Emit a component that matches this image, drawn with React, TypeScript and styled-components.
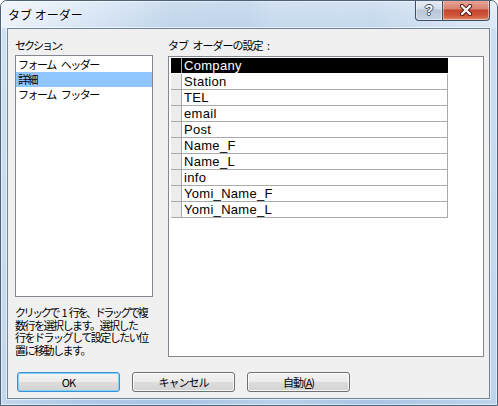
import styled, { createGlobalStyle } from 'styled-components';

const GlobalStyle = createGlobalStyle`
  html, body {
    margin: 0;
    padding: 0;
    background: #ffffff;
  }
  * {
    box-sizing: border-box;
  }
`;

const jpFont = `"Noto Sans CJK JP", "Noto Sans", sans-serif`;
const latinFont = `"Liberation Sans", Arial, "Noto Sans CJK JP", sans-serif`;

const Window = styled.div`
  width: 498px;
  height: 406px;
  display: flex;
  flex-direction: column;
  border: 1px solid #4d6178;
  border-radius: 7px 7px 0 0;
  background:
    linear-gradient(90deg, rgba(255, 255, 255, 0.25) 0%, rgba(255, 255, 255, 0) 15%, rgba(140, 170, 205, 0.18) 35%, rgba(255, 255, 255, 0.12) 55%, rgba(140, 170, 205, 0.15) 75%, rgba(255, 255, 255, 0.2) 100%),
    linear-gradient(180deg, #d6e5f5 0%, #c0d6ee 8%, #b7cfea 60%, #aecae8 100%);
  box-shadow: inset 0 0 0 1px rgba(255, 255, 255, 0.55);
  overflow: hidden;
`;

const TitleBar = styled.div`
  height: 27px;
  display: flex;
  align-items: center;
  justify-content: space-between;
  padding: 0 7px 0 7px;
  background: linear-gradient(90deg, rgba(255, 255, 255, 0.55) 0%, rgba(255, 255, 255, 0.15) 30%, rgba(160, 185, 215, 0.2) 50%, rgba(255, 255, 255, 0.1) 70%, rgba(255, 255, 255, 0.25) 100%);
`;

const Title = styled.div`
  font-family: ${jpFont};
  font-size: 12px;
  line-height: 27px;
  color: #000;
  text-shadow: 0 0 6px rgba(255, 255, 255, 0.9), 0 0 3px rgba(255, 255, 255, 0.9);
`;

const CaptionButtons = styled.div`
  display: flex;
  align-self: flex-start;
  margin-top: -1px;
`;

const CaptionButton = styled.div<{ $kind: 'help' | 'close' }>`
  height: 21px;
  width: ${p => (p.$kind === 'help' ? 28 : 47)}px;
  display: flex;
  align-items: center;
  justify-content: center;
  border: 1px solid #3b4e65;
  border-top: none;
  border-left-width: ${p => (p.$kind === 'help' ? 1 : 0)}px;
  border-radius: ${p => (p.$kind === 'help' ? '0 0 0 4px' : '0 0 4px 0')};
  background: ${p =>
    p.$kind === 'help'
      ? 'linear-gradient(180deg, #e9eef5 0%, #d3dde9 45%, #b9c7d8 50%, #c6d3e2 100%)'
      : 'linear-gradient(180deg, #e9a99a 0%, #d9826f 45%, #c4442c 50%, #d0583b 80%, #e08a6a 100%)'};
  box-shadow: inset 0 0 0 1px rgba(255, 255, 255, 0.45);
`;

const HelpGlyph = styled.span`
  font-family: ${latinFont};
  font-weight: bold;
  font-size: 14px;
  line-height: 1;
  color: #ffffff;
  text-shadow: 1px 0 0 #3a4c60, -1px 0 0 #3a4c60, 0 1px 0 #3a4c60, 0 -1px 0 #3a4c60;
`;

const Client = styled.div`
  flex: 1;
  margin: 0 7px 6px 6px;
  border: 1px solid #6f849c;
  box-shadow: 0 0 0 1px rgba(255, 255, 255, 0.6);
  background: #f0f0f0;
  display: flex;
  flex-direction: column;
  padding: 9px 5px 6px 7px;
`;

const Main = styled.div`
  display: grid;
  grid-template-columns: 138px 1fr;
  column-gap: 15px;
  height: 319px;
`;

const Column = styled.div`
  display: flex;
  flex-direction: column;
`;

const Label = styled.div<{ $h: number; $spacing: number }>`
  height: ${p => p.$h}px;
  font-family: ${jpFont};
  font-size: 11px;
  line-height: 14px;
  letter-spacing: ${p => p.$spacing}px;
  word-spacing: 3px;
  color: #000;
  white-space: pre;
`;

const ListBox = styled.div`
  height: 242px;
  border: 1px solid #828790;
  background: #ffffff;
  padding: 1px 0;
`;

const ListItem = styled.div<{ $selected?: boolean }>`
  height: 15px;
  padding-left: 2px;
  font-family: ${jpFont};
  font-size: 11px;
  line-height: 15px;
  letter-spacing: -1.5px;
  word-spacing: 4px;
  color: #000;
  white-space: pre;
  background: ${p => (p.$selected ? '#90c6fd' : 'transparent')};
`;

const HelpText = styled.div`
  margin-top: 9px;
  display: flex;
  flex-direction: column;
`;

const HelpLine = styled.div<{ $tight?: boolean }>`
  height: 12.5px;
  font-family: ${jpFont};
  font-size: 11px;
  line-height: 12.5px;
  letter-spacing: ${p => (p.$tight ? -2.4 : -1.5)}px;
  word-spacing: ${p => (p.$tight ? 3.5 : 4)}px;
  color: #000;
  white-space: pre;
`;

const Grid = styled.div`
  height: 301px;
  border: 1px solid #828790;
  background: #ffffff;
  padding: 1px 0 0 2px;
`;

const Row = styled.div<{ $selected?: boolean }>`
  width: 277px;
  height: 16px;
  display: flex;
  border-bottom: 1px solid ${p => (p.$selected ? '#ffffff' : '#a9a9a9')};
`;

const Selector = styled.div<{ $selected?: boolean }>`
  width: 10px;
  background: ${p => (p.$selected ? '#000000' : '#ececec')};
`;

const Cell = styled.div<{ $selected?: boolean }>`
  flex: 1;
  border-left: 1px solid #a9a9a9;
  border-right: 1px solid ${p => (p.$selected ? '#000000' : '#a9a9a9')};
  background: ${p => (p.$selected ? '#000000' : '#ffffff')};
  color: ${p => (p.$selected ? '#ffffff' : '#000000')};
  padding-left: 2px;
  font-family: ${latinFont};
  font-size: 13px;
  line-height: 15px;
  letter-spacing: 0.3px;
  overflow: hidden;
  white-space: nowrap;
`;

const ButtonRow = styled.div`
  display: flex;
  gap: 12px;
  margin-top: 15px;
  padding-left: 2px;
`;

const Button = styled.div<{ $default?: boolean }>`
  width: 103px;
  height: 20px;
  display: flex;
  align-items: center;
  justify-content: center;
  border: 1px solid ${p => (p.$default ? '#3c8fd0' : '#707070')};
  border-radius: 3px;
  background: linear-gradient(180deg, #f3f3f3 0%, #ebebeb 48%, #dddddd 52%, #d2d2d2 100%);
  box-shadow: inset 0 0 0 1px ${p => (p.$default ? '#7fd3f7' : 'rgba(255, 255, 255, 0.8)')};
  font-family: ${jpFont};
  font-size: 11px;
  letter-spacing: -1px;
  color: #000;
`;

const Access = styled.span`
  text-decoration: underline;
`;

const fields = [
  'Company',
  'Station',
  'TEL',
  'email',
  'Post',
  'Name_F',
  'Name_L',
  'info',
  'Yomi_Name_F',
  'Yomi_Name_L',
];

const sections = ['フォーム ヘッダー', '詳細', 'フォーム フッター'];

const helpLines = [
  'クリックで 1 行を、ドラッグで複',
  '数行を選択します。選択した',
  '行をドラッグして設定したい位',
  '置に移動します。',
];

const App = () => {
  return (
    <>
      <GlobalStyle />
      <Window>
        <TitleBar>
          <Title>タブ オーダー</Title>
          <CaptionButtons>
            <CaptionButton $kind="help">
              <HelpGlyph>?</HelpGlyph>
            </CaptionButton>
            <CaptionButton $kind="close">
              <svg width="14" height="12" viewBox="0 0 14 12">
                <path d="M3 2 L11 10 M11 2 L3 10" stroke="#4a1a10" strokeWidth="4.2" strokeLinecap="round" />
                <path d="M3 2 L11 10 M11 2 L3 10" stroke="#ffffff" strokeWidth="2.4" strokeLinecap="round" />
              </svg>
            </CaptionButton>
          </CaptionButtons>
        </TitleBar>
        <Client>
          <Main>
            <Column>
              <Label $h={17} $spacing={-2}>セクション:</Label>
              <ListBox>
                {sections.map((s, i) => (
                  <ListItem key={s} $selected={i === 1}>{s}</ListItem>
                ))}
              </ListBox>
              <HelpText>
                {helpLines.map((l, i) => (
                  <HelpLine key={l} $tight={i === 0}>{l}</HelpLine>
                ))}
              </HelpText>
            </Column>
            <Column>
              <Label $h={18} $spacing={-1}>タブ オーダーの設定 :</Label>
              <Grid>
                {fields.map((f, i) => (
                  <Row key={f} $selected={i === 0}>
                    <Selector $selected={i === 0} />
                    <Cell $selected={i === 0}>{f}</Cell>
                  </Row>
                ))}
              </Grid>
            </Column>
          </Main>
          <ButtonRow>
            <Button $default>OK</Button>
            <Button>キャンセル</Button>
            <Button>
              自動(<Access>A</Access>)
            </Button>
          </ButtonRow>
        </Client>
      </Window>
    </>
  );
};

export default App;
